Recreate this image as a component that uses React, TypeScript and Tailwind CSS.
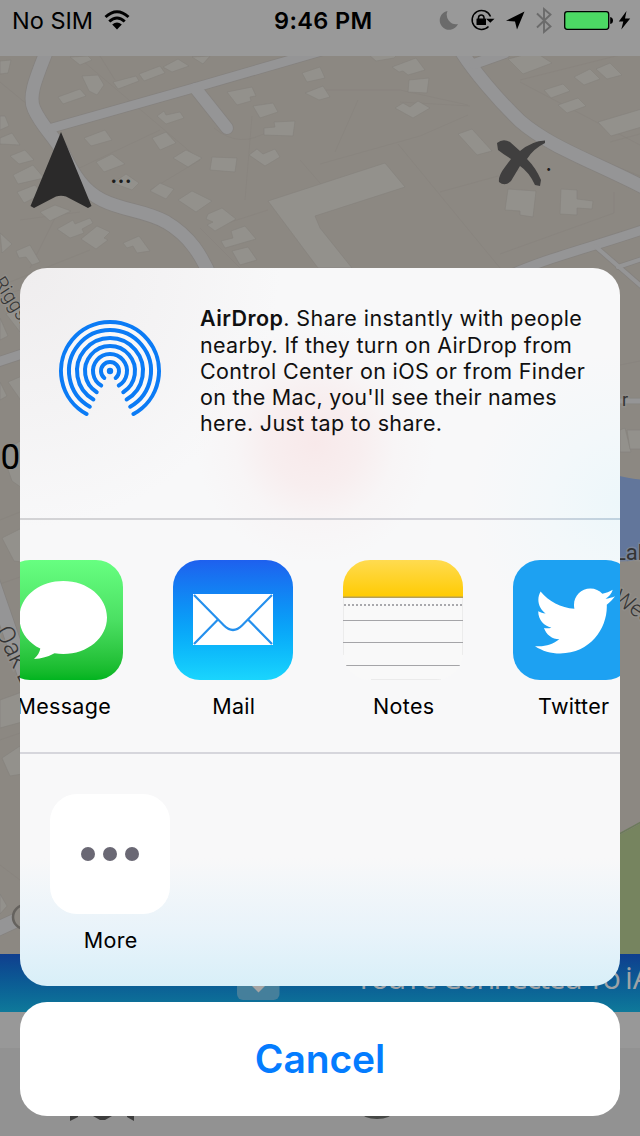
import type { ReactNode } from "react";
import { FaTwitter } from "react-icons/fa";

const roads: { d: string; w: number }[] = [
  { d: "M47 50C36 78 28 96 34 109C42 127 54 136 62 151C74 176 84 191 102 200C124 211 144 210 166 222C190 236 202 256 212 280", w: 13 },
  { d: "M52 128L190 89L325 50", w: 9 },
  { d: "M196 89L227 128", w: 12 },
  { d: "M458 46C472 70 500 102 520 121C550 147 590 160 645 188", w: 13 },
  { d: "M474 64L505 53", w: 10 },
  { d: "M505 277C545 258 590 248 648 228", w: 9 },
  { d: "M595 246L648 292", w: 4 },
  { d: "M618 267L648 257", w: 4 },
  { d: "M-5 363L25 353", w: 9 },
  { d: "M-8 580L30 690", w: 14 },
  { d: "M-5 930L30 914", w: 14 },
  { d: "M612 401H645", w: 5 },
];

const buildings = [
  "268,201 385,163 405,187 315,216 320,228 352,268 318,268",
  "58,97 80,89 86,96 63,104", "82,76 98,75 104,85 97,95 89,91",
  "113,82 136,76 139,81 118,89", "139,74 160,66 165,73 144,81",
  "163,67 178,59 189,66 172,72", "70,57 88,56 92,60 80,65", "192,57 210,56 203,64",
  "0,61 11,60 8,73 0,74", "0,116 5,116 9,126 0,130", "0,138 12,133 20,145 0,144",
  "10,156 25,150 34,160 19,164", "13,175 33,165 44,178 18,184", "17,192 35,185 42,194 24,203",
  "40,212 55,205 71,211 50,221", "57,229 73,220 75,224 90,218 93,223 82,229 84,233 70,238",
  "81,239 97,226 110,232 104,238 108,240 96,249", "123,243 139,236 150,251 137,253 133,246 127,248",
  "0,233 12,244 2,253", "16,251 30,245 40,262 32,265 26,257 19,258",
  "84,138 105,130 112,140 91,146", "96,162 112,154 125,164 104,172",
  "113,183 126,174 139,183 132,190", "157,116 164,111 166,115 180,112 184,118 166,124",
  "152,138 166,132 176,143 160,150", "173,158 186,150 202,158 188,167",
  "212,157 237,158 235,172 210,170", "249,155 257,149 263,154 275,149 280,157 265,166",
  "227,92 252,87 256,96 250,97 251,101 237,105", "253,106 273,103 278,112 260,118",
  "264,128 275,127 274,122 295,121 293,136 264,135",
  "302,73 320,67 325,78 307,82", "305,93 323,86 330,97 319,100",
  "150,191 160,183 174,189 166,199", "178,200 192,191 212,201 196,212",
  "206,219 208,214 222,208 236,219 215,231 207,225 213,222", "221,241 233,238 231,231 245,226 256,239 225,248",
  "232,251 248,247 257,260 240,265",
  "369,55 397,55 394,58 376,61", "392,67 416,58 425,70 408,75 403,71 399,72", "409,80 429,78 427,93 408,92",
  "395,108 403,103 410,107 418,101 430,108 413,118",
  "458,134 472,129 492,151 477,155", "508,59 535,52 552,63 523,74",
  "544,90 563,84 570,91 551,98", "558,105 578,98 586,106 567,113",
  "574,77 590,69 600,79 584,85", "596,69 610,63 622,75 607,79",
  "598,122 645,108 645,126 611,136",
  "508,189 536,191 533,217 520,215 520,211 505,210",
  "561,189 577,190 577,199 593,201 592,209 577,208 577,215 560,214",
  "6,314 20,308 20,332", "0,318 8,336 0,340", "8,382 22,376 22,402", "0,382 7,396 0,400",
  "2,452 22,440 22,488 12,481", "2,538 22,528 22,562 14,561",
  "0,700 22,692 22,722 0,728", "2,758 20,746 22,774 10,776", "0,894 7,906 0,914",
  "620,430 625,428 631,452 620,452", "627,430 645,430 645,449 630,449",
];

const parcels =
  "M0 82L34 110M54 180L160 130M84 62L200 160L150 190M100 56L115 80M214 128Q240 150 270 130M252 116L245 200M300 160L340 206M320 164L420 136L468 115M398 144L500 268M440 192L520 170M320 90L400 90L468 105M400 102L470 106M335 152L358 100M470 73Q520 124 560 144L640 176M520 80L640 50M520 82L640 145M610 142L640 134M614 192V213L500 254M0 286L90 250M20 220L80 212M60 208L30 268M212 228L268 210M200 228L240 268M0 520L20 512M0 584L20 577M0 740L20 733M0 865L20 880M0 296L20 290M620 365L640 361";

function MapDrawing() {
  return (
    <svg width="640" height="898" viewBox="0 56 640 898" className="block shrink-0">
      <rect y="56" width="640" height="898" fill="#8c8882" />
      <path d={parcels} fill="none" stroke="#84807a" strokeWidth="1" opacity=".4" />
      {buildings.map((p) => (
        <polygon key={p} points={p} fill="#93918c" stroke="#85827c" strokeWidth=".6" />
      ))}
      <path d="M612 474Q630 479 645 480V562H612Z" fill="#62769b" />
      <path d="M612 561Q628 563 645 558V575H612Z" fill="#8c8882" />
      <path d="M612 839L645 821V956H612Z" fill="#76845f" />
      <path d="M612 838L645 820" stroke="#6c7a5b" strokeWidth="1.5" />
      {roads.map((r) => (
        <path key={r.d} d={r.d} fill="none" stroke="#85827f" strokeWidth={r.w + 1.6} strokeLinecap="round" />
      ))}
      {roads.map((r) => (
        <path key={r.d} d={r.d} fill="none" stroke="#959596" strokeWidth={r.w} strokeLinecap="round" />
      ))}
      <g fill="#343434" fontFamily="Roboto, sans-serif" stroke="#98979466" strokeWidth="3" paintOrder="stroke">
        <text x="-7" y="282" fontSize="19" fontWeight="300" transform="rotate(57 -7 282)">Riggsby</text>
        <text x="-5" y="631" fontSize="25" fontWeight="300" transform="rotate(64 -5 631)">Oak L</text>
        <text x="622" y="406" fontSize="18">r</text>
        <text x="614" y="560" fontSize="22">Lake</text>
        <text x="612" y="601" fontSize="22" fontWeight="300" transform="rotate(34 612 601)">West</text>
      </g>
      <circle cx="25" cy="917" r="12" fill="#8c8882" stroke="#65625e" strokeWidth="2.5" />
      <text x="0.500" y="469" fontSize="35" fontFamily="Roboto, sans-serif">0</text>
      <path d="M61 132L91.500 206L88 208L66 196.500Q61 195 56 196.500L34 208L30.500 206Z" fill="#2b2a2a" />
      <path d="M497 143Q503 138 510 142L520 151Q532 141 545 140.500V143Q533 149 527 159Q536 168 541 180L540 186L535 185Q529 172 520 166L511 181Q505 187 499 182Q498 176 505 167L511 159Q503 154 498 150Z" fill="#403f3f" />
      <g fontFamily="Inter, sans-serif" fontSize="26" fill="#1c1c1c">
        <text x="110" y="183" textLength="22">...</text>
        <text x="545.500" y="171" fontSize="22">.</text>
      </g>
    </svg>
  );
}

function Backdrop() {
  return (
    <div className="absolute inset-0 -z-10 flex flex-col bg-[#929292]">
      <div className="h-14 shrink-0 bg-[#999999]" />
      <MapDrawing />
      <div className="h-[58px] shrink-0 bg-linear-to-b from-[#103e8e] to-[#0f799a]">
        <svg width="640" height="58" viewBox="0 954 640 58" className="block">
          <rect x="237" y="940" width="42.500" height="60" rx="6" fill="#457f9b" />
          <path d="M251 985H266L258.500 992.500Z" fill="#a6a5a4" />
          <text x="355" y="989" fontSize="31" fontFamily="'Open Sans', sans-serif" fill="#9ea3a7" textLength="266">
            You're Connected To
          </text>
          <text x="625" y="989" fontSize="31" fontFamily="'Open Sans', sans-serif" fill="#9ea3a7">iA</text>
        </svg>
      </div>
      <div className="h-9 shrink-0 bg-[#989898]" />
      <svg width="640" height="88" viewBox="0 1048 640 88" className="block shrink-0">
        <path d="M70 1110H78V1117L70 1121ZM93 1110H112V1116L105 1120H100L93 1116ZM127 1110H134V1121L127 1117Z" fill="#3d3d3d" />
        <ellipse cx="377" cy="1112" rx="16" ry="7" fill="#464846" />
      </svg>
    </div>
  );
}

function StatusBar() {
  return (
    <header className="flex h-14 shrink-0 items-start">
      <div className="flex h-10 w-[274px] items-center pl-[12px]">
        <span className="w-[92px] pt-0.5 text-[23.5px]">No SIM</span>
        <svg width="26" height="20" viewBox="0 0 26 20">
          <g fill="none" stroke="#000" strokeWidth="3">
            <path d="M1.500 7Q13 -3.500 24.500 7" />
            <path d="M5.300 11.500Q13 4.500 20.700 11.500" />
          </g>
          <path d="M8.200 14.500Q13 10.500 17.800 14.500L13 19.500Z" />
        </svg>
      </div>
      <div className="flex h-10 w-[163px] items-center pt-0.5 text-[23.5px] font-semibold tracking-[0.35px]">9:46 PM</div>
      <svg width="203" height="40" viewBox="437 0 203 40">
        <path d="M447.500 11A9.500 9.500 0 1 0 458 24A9.500 9.500 0 0 1 447.500 11Z" fill="#6b6b6b" />
        <path d="M490.500 16.500A9.500 9.500 0 1 0 488.500 26.500" fill="none" stroke="#000" strokeWidth="1.500" />
        <path d="M486 18.800H494.500L490.300 22.800Z" />
        <rect x="476.500" y="18.500" width="9.500" height="6.500" rx=".6" />
        <path d="M478.500 19V17.300A2.800 2.800 0 0 1 484 17.300V19" fill="none" stroke="#000" strokeWidth="1.500" />
        <path d="M506 20.800L524.500 11.500L517 29.500L515 21.500Z" />
        <path d="M537 13.500L550.500 26.500L544 32V9L550.500 14.500L537 27.500" fill="none" stroke="#6b6b6b" strokeWidth="1.900" />
        <rect x="564.700" y="11.700" width="44" height="17.600" rx="2.500" fill="#4cd964" stroke="#000" strokeWidth="1.300" />
        <path d="M610.200 17Q613 17.500 613 20.500T610.200 24Z" />
        <path d="M626.500 11L618.800 21.500H623.300L621.300 29.500L630.200 18.500H625Z" />
      </svg>
    </header>
  );
}

const rings: [number, number][] = [[49, 28.6], [41, 29.5], [33, 30.2], [25, 32], [17, 31], [9, 39]];

function AirDropIcon() {
  return (
    <svg width="104" height="104" viewBox="-52 -52 104 104" className="block">
      <path d="M0 0L-24 43A49 49 0 1 1 24 43Z" fill="#fff" opacity=".45" />
      <circle r="3.200" fill="#0b7bf5" />
      {rings.map(([r, deg]) => {
        const x = r * Math.sin((deg * Math.PI) / 180);
        const y = r * Math.cos((deg * Math.PI) / 180);
        return (
          <path
            key={r}
            d={`M${-x} ${y}A${r} ${r} 0 1 1 ${x} ${y}`}
            fill="none"
            stroke="#0b7bf5"
            strokeWidth="4"
            strokeLinecap="round"
          />
        );
      })}
    </svg>
  );
}

function MessageIcon() {
  return (
    <div className="size-full bg-linear-to-b from-[#67ff81] via-[#4be063] via-50% to-[#01b41f]">
      <svg width="120" height="120" viewBox="0 0 120 120">
        <path d="M60.300 21C84.500 21 104 37 104 57.500S84.500 94 60.300 94Q56 94 51.500 93.200Q42 98.500 31 99Q36.500 94 37.300 88.500C24 82 16.500 71 16.500 57.500C16.500 37 36 21 60.300 21Z" fill="#fff" />
      </svg>
    </div>
  );
}

function MailIcon() {
  return (
    <div className="size-full bg-linear-to-b from-[#1e60ee] to-[#1ad5fd]">
      <svg width="120" height="120" viewBox="0 0 120 120">
        <rect x="20" y="34" width="80" height="51" fill="#fff" />
        <path d="M21 35L51 65.500Q60 74.500 69 65.500L99 35M21 84L44.500 60M99 84L75.500 60" fill="none" stroke="#2590ed" strokeWidth="2.200" />
      </svg>
    </div>
  );
}

function NotesIcon() {
  return (
    <svg width="120" height="120" viewBox="0 0 120 120">
      <defs>
        <linearGradient id="pad" x2="0" y2="1">
          <stop stopColor="#ffdb50" />
          <stop offset="1" stopColor="#ffcb02" />
        </linearGradient>
      </defs>
      <rect width="120" height="120" fill="#f9f9f9" />
      <path d="M.4 37V95M119.600 37V95M28 119.500H98" stroke="#e9e9e9" strokeWidth=".9" />
      <rect width="120" height="37" fill="url(#pad)" />
      <path d="M0 37.300H120" stroke="#b5a05a" strokeWidth="1.600" />
      <path d="M1 45H120" stroke="#a9a9ad" strokeWidth="2" strokeDasharray="2 2" />
      <path d="M0 60.500H120M0 82.500H120M3 105.500H117" stroke="#a5a5a8" strokeWidth="1" />
    </svg>
  );
}

function TwitterIcon() {
  return (
    <div className="size-full bg-[#1da1f2] pt-[20.500px] pl-[21.500px]">
      <FaTwitter size={80} color="#fff" />
    </div>
  );
}

function MoreIcon() {
  return (
    <div className="flex size-full items-center justify-center gap-2 bg-white">
      <span className="size-3.5 rounded-full bg-[#6a6874]" />
      <span className="size-3.5 rounded-full bg-[#6a6874]" />
      <span className="size-3.5 rounded-full bg-[#6a6874]" />
    </div>
  );
}

function Tile({ label, children }: { label: string; children: ReactNode }) {
  return (
    <div className="flex w-[120px] shrink-0 flex-col items-center">
      <div className="size-[120px] overflow-hidden rounded-[27px]">{children}</div>
      <span className="mt-[13px] pl-[1.5px] text-[21.5px] leading-[27px] tracking-[0.3px] whitespace-nowrap">{label}</span>
    </div>
  );
}

export default function App() {
  return (
    <main className="relative isolate flex h-[1136px] w-[640px] flex-col overflow-hidden font-['Inter',sans-serif] text-black">
      <Backdrop />
      <StatusBar />
      <section className="mx-5 mt-[212px] flex h-[718px] shrink-0 flex-col overflow-hidden rounded-[27px] bg-[#f8f8f9] bg-[radial-gradient(circle_at_295px_175px,#f8e9ea_0,#f8eeef_45px,#f8f5f6_80px,#f8f8f900_120px),radial-gradient(circle_at_600px_235px,#edf7fa_0,#f3f8fa_70px,#f8f8f900_150px),radial-gradient(circle_at_0_0,#efedee_0,#f8f8f900_260px),linear-gradient(to_bottom,#f8f8f900_590px,#e8f3fa_665px,#d8eff8_718px)]">
        <div className="flex h-[250px] shrink-0 pt-[37px] pl-[38px]">
          <div className="w-[142px] pt-[14px]">
            <AirDropIcon />
          </div>
          <p className="text-[21.5px] leading-[26.300px] tracking-[0.35px] whitespace-nowrap text-[#101010]">
            <span className="tracking-[0.42px]"><b className="font-semibold">AirDrop</b>. Share instantly with people</span>
            <br />
            <span className="relative top-px tracking-[0.29px]">nearby. If they turn on AirDrop from</span>
            <br />
            Control Center on iOS or from Finder
            <br />
            <span className="tracking-[0.27px]">on the Mac, you'll see their names</span>
            <br />
            here. Just tap to share.
          </p>
        </div>
        <div className="h-0.5 shrink-0 bg-linear-to-r from-[#d3d3d5] via-[#d3d3da] via-80% to-[#bfd3e0]" />
        <div className="-ml-[17px] flex h-[232px] shrink-0 gap-[50px] pt-10">
          <Tile label="Message"><MessageIcon /></Tile>
          <Tile label="Mail"><MailIcon /></Tile>
          <Tile label="Notes"><NotesIcon /></Tile>
          <Tile label="Twitter"><TwitterIcon /></Tile>
        </div>
        <div className="h-0.5 shrink-0 bg-[#d6d6dc]" />
        <div className="flex pt-10 pl-[30px]">
          <Tile label="More"><MoreIcon /></Tile>
        </div>
      </section>
      <button className="mx-5 mt-4 flex h-[114px] shrink-0 items-center justify-center rounded-[27px] bg-white text-[39px] font-semibold tracking-[-0.1px] text-[#047cff]">
        Cancel
      </button>
    </main>
  );
}
